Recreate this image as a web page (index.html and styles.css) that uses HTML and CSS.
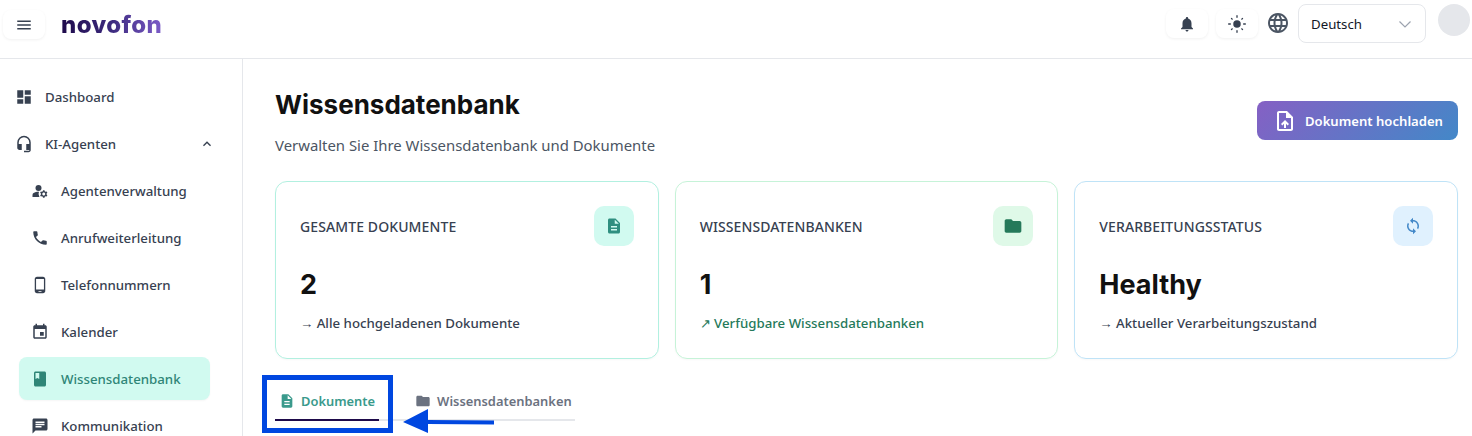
FILE: index.html
```html
<!DOCTYPE html>
<html lang="de">
<head>
<meta charset="utf-8">
<title>Wissensdatenbank</title>
<link rel="stylesheet" href="styles.css">
</head>
<body>
<header class="topbar">
  <div class="topbar-left">
    <button class="icon-btn menu-btn"><svg viewBox="0 0 24 24" class="i18"><path d="M3 18h18v-2H3v2zm0-5h18v-2H3v2zm0-7v2h18V6H3z"/></svg></button>
    <span class="logo">novofon</span>
  </div>
  <div class="topbar-right">
    <button class="icon-btn"><svg viewBox="0 0 24 24" class="i18"><path d="M12 22c1.100 0 2-.9 2-2h-4c0 1.100.9 2 2 2zm6-6v-5c0-3.070-1.630-5.640-4.500-6.320V4c0-.83-.67-1.500-1.500-1.500s-1.500.67-1.500 1.500v.68C7.640 5.360 6 7.920 6 11v5l-2 2v1h16v-1l-2-2z"/></svg></button>
    <button class="icon-btn"><svg viewBox="0 0 24 24" class="i20"><path d="M12 7.500a4.500 4.500 0 1 0 0 9 4.500 4.500 0 0 0 0-9zM2 12.800h2a.8.8 0 0 0 0-1.600H2a.8.8 0 0 0 0 1.600zm18 0h2a.8.8 0 0 0 0-1.600h-2a.8.8 0 0 0 0 1.600zM11.200 2v2a.8.8 0 0 0 1.600 0V2a.8.8 0 0 0-1.600 0zm0 18v2a.8.8 0 0 0 1.600 0v-2a.8.8 0 0 0-1.600 0zM5.800 4.700a.8.8 0 0 0-1.100 1.100l1.100 1.100a.8.8 0 0 0 1.100-1.100L5.800 4.700zm12.400 12.400a.8.8 0 0 0-1.100 1.100l1.100 1.100a.8.8 0 0 0 1.100-1.100l-1.100-1.100zm1.100-11.300a.8.8 0 0 0-1.100-1.100l-1.100 1.100a.8.8 0 0 0 1.100 1.100l1.100-1.100zM6.900 18.200a.8.8 0 0 0-1.100-1.100l-1.100 1.100a.8.8 0 0 0 1.100 1.100l1.100-1.100z"/></svg></button>
    <svg viewBox="0 0 24 24" class="globe"><path d="M11.990 2C6.470 2 2 6.480 2 12s4.470 10 9.990 10C17.520 22 22 17.520 22 12S17.520 2 11.990 2zm6.930 6h-2.950c-.32-1.250-.78-2.450-1.380-3.560 1.840.63 3.370 1.910 4.330 3.560zM12 4.040c.83 1.200 1.480 2.530 1.910 3.960h-3.820c.43-1.430 1.080-2.760 1.910-3.960zM4.260 14C4.100 13.360 4 12.690 4 12s.1-1.360.26-2h3.380c-.08.66-.14 1.320-.14 2s.06 1.340.14 2H4.260zm.82 2h2.950c.32 1.250.78 2.450 1.380 3.560-1.840-.63-3.370-1.900-4.330-3.560zm2.950-8H5.080c.96-1.660 2.490-2.930 4.330-3.560C8.810 5.550 8.350 6.750 8.030 8zM12 19.960c-.83-1.200-1.480-2.530-1.910-3.960h3.820c-.43 1.430-1.080 2.760-1.910 3.960zM14.340 14H9.660c-.09-.66-.16-1.320-.16-2s.07-1.350.16-2h4.680c.09.65.16 1.320.16 2s-.07 1.340-.16 2zm.25 5.560c.6-1.110 1.060-2.310 1.380-3.560h2.950c-.96 1.650-2.490 2.930-4.330 3.560zM16.360 14c.08-.66.14-1.320.14-2s-.06-1.340-.14-2h3.380c.16.64.26 1.310.26 2s-.1 1.360-.26 2h-3.380z"/></svg>
    <div class="lang"><span>Deutsch</span><svg viewBox="0 0 16 16" class="lang-caret"><path d="M2.500 5.500 8 11l5.500-5.500"/></svg></div>
    <div class="avatar"></div>
  </div>
</header>
<div class="shell">
  <nav class="sidebar">
    <a class="nav-item"><svg viewBox="0 0 24 24" class="i18"><path d="M3 13h8V3H3v10zm0 8h8v-6H3v6zm10 0h8V11h-8v10zm0-18v6h8V3h-8z"/></svg><span>Dashboard</span></a>
    <a class="nav-item"><svg viewBox="0 0 24 24" class="i18"><path d="M12 1a9 9 0 0 0-9 9v7c0 1.660 1.340 3 3 3h3v-8H5v-2a7 7 0 0 1 14 0v2h-4v8h4v1h-7v2h6c1.660 0 3-1.340 3-3V10a9 9 0 0 0-9-9z"/></svg><span>KI-Agenten</span><svg viewBox="0 0 24 24" class="chev"><path d="M7.410 15.410 12 10.830l4.590 4.580L18 14l-6-6-6 6z"/></svg></a>
    <div class="sub">
      <a class="nav-item"><svg viewBox="0 0 24 24" class="i18"><circle cx="10" cy="8" r="4"/><path d="M10.670 13.020C10.450 13.010 10.230 13 10 13c-2.420 0-4.680.67-6.610 1.820C2.510 15.340 2 16.320 2 17.350V20h9.260A6.960 6.960 0 0 1 10.670 13.020zM20.750 16c0-.220-.030-.420-.060-.630l1.140-1.010-1-1.730-1.450.49c-.320-.270-.680-.480-1.080-.630L18 11h-2l-.300 1.490c-.400.150-.760.360-1.080.630l-1.450-.49-1 1.730 1.140 1.010c-.030.210-.060.410-.060.630s.030.420.060.630l-1.140 1.010 1 1.730 1.450-.49c.320.270.680.480 1.080.630L16 21h2l.300-1.490c.400-.150.760-.360 1.080-.630l1.450.49 1-1.730-1.140-1.010c.030-.210.060-.410.060-.630zM17 18c-1.100 0-2-.900-2-2s.900-2 2-2 2 .900 2 2-.900 2-2 2z"/></svg><span>Agentenverwaltung</span></a>
      <a class="nav-item"><svg viewBox="0 0 24 24" class="i18"><path d="M6.620 10.790c1.440 2.830 3.760 5.140 6.590 6.590l2.200-2.200c.27-.27.670-.36 1.020-.24 1.120.37 2.330.57 3.570.57.550 0 1 .45 1 1V20c0 .55-.45 1-1 1-9.390 0-17-7.610-17-17 0-.55.450-1 1-1h3.500c.55 0 1 .45 1 1 0 1.250.2 2.450.57 3.570.11.350.03.740-.25 1.020l-2.200 2.200z"/></svg><span>Anrufweiterleitung</span></a>
      <a class="nav-item"><svg viewBox="0 0 24 24" class="i18"><path d="M16 1H8C6.340 1 5 2.340 5 4v16c0 1.660 1.340 3 3 3h8c1.660 0 3-1.340 3-3V4c0-1.660-1.340-3-3-3zm-2 20h-4v-1h4v1zm3.250-3H6.750V4h10.500v14z"/></svg><span>Telefonnummern</span></a>
      <a class="nav-item"><svg viewBox="0 0 24 24" class="i18"><path d="M17 12h-5v5h5v-5zM16 1v2H8V1H6v2H5c-1.110 0-1.990.9-1.990 2L3 19c0 1.100.89 2 2 2h14c1.100 0 2-.9 2-2V5c0-1.100-.9-2-2-2h-1V1h-2zm3 18H5V8h14v11z"/></svg><span>Kalender</span></a>
      <a class="nav-item active"><svg viewBox="0 0 24 24" class="i18"><path d="M18 2H6c-1.100 0-2 .9-2 2v16c0 1.100.9 2 2 2h12c1.100 0 2-.9 2-2V4c0-1.100-.9-2-2-2zM6 4h5v8l-2.500-1.500L6 12V4z"/></svg><span>Wissensdatenbank</span></a>
      <a class="nav-item"><svg viewBox="0 0 24 24" class="i18"><path d="M20 2H4c-1.100 0-1.990.9-1.990 2L2 22l4-4h14c1.100 0 2-.9 2-2V4c0-1.100-.9-2-2-2zM6 9h12v2H6V9zm8 5H6v-2h8v2zm4-6H6V6h12v2z"/></svg><span>Kommunikation</span></a>
    </div>
  </nav>
  <main class="content">
    <div class="page-head">
      <div>
        <h1>Wissensdatenbank</h1>
        <p class="subtitle">Verwalten Sie Ihre Wissensdatenbank und Dokumente</p>
      </div>
      <button class="upload"><svg viewBox="0 0 24 24" class="i24"><path d="M14 2H6c-1.100 0-1.990.9-1.990 2L4 20c0 1.100.890 2 1.990 2H18c1.100 0 2-.9 2-2V8l-6-6zm4 18H6V4h7v5h5v11zM8 15.010l1.410 1.410L11 14.840V19h2v-4.160l1.590 1.590L16 15.010 12.010 11 8 15.010z"/></svg>Dokument hochladen</button>
    </div>
    <section class="cards">
      <article class="card card-teal">
        <div class="card-top"><span class="card-label">GESAMTE DOKUMENTE</span><span class="card-icon"><svg viewBox="0 0 24 24" class="i18"><path d="M14 2H6c-1.100 0-1.990.9-1.990 2L4 20c0 1.100.890 2 1.990 2H18c1.100 0 2-.9 2-2V8l-6-6zm2 16H8v-2h8v2zm0-4H8v-2h8v2zm-3-5V3.500L18.500 9H13z"/></svg></span></div>
        <div class="card-value">2</div>
        <div class="card-note">→ Alle hochgeladenen Dokumente</div>
      </article>
      <article class="card card-green">
        <div class="card-top"><span class="card-label">WISSENSDATENBANKEN</span><span class="card-icon"><svg viewBox="0 0 24 24" class="i20"><path d="M10 4H4c-1.100 0-1.990.9-1.990 2L2 18c0 1.100.9 2 2 2h16c1.100 0 2-.9 2-2V8c0-1.100-.9-2-2-2h-8l-2-2z"/></svg></span></div>
        <div class="card-value">1</div>
        <div class="card-note note-green">↗ Verfügbare Wissensdatenbanken</div>
      </article>
      <article class="card card-blue">
        <div class="card-top"><span class="card-label">VERARBEITUNGSSTATUS</span><span class="card-icon"><svg viewBox="0 0 24 24" class="i18"><path d="M12 4V1L8 5l4 4V6c3.310 0 6 2.690 6 6 0 1.010-.25 1.970-.7 2.800l1.460 1.460C19.540 15.030 20 13.570 20 12c0-4.420-3.580-8-8-8zm0 14c-3.310 0-6-2.690-6-6 0-1.010.25-1.970.7-2.800L5.240 7.740C4.460 8.970 4 10.430 4 12c0 4.420 3.580 8 8 8v3l4-4-4-4v3z"/></svg></span></div>
        <div class="card-value">Healthy</div>
        <div class="card-note">→ Aktueller Verarbeitungszustand</div>
      </article>
    </section>
    <div class="tabs">
      <a class="tab tab-active"><svg viewBox="0 0 24 24" class="i16"><path d="M14 2H6c-1.100 0-1.990.9-1.990 2L4 20c0 1.100.890 2 1.990 2H18c1.100 0 2-.9 2-2V8l-6-6zm2 16H8v-2h8v2zm0-4H8v-2h8v2zm-3-5V3.500L18.500 9H13z"/></svg>Dokumente</a>
      <a class="tab"><svg viewBox="0 0 24 24" class="i16"><path d="M10 4H4c-1.100 0-1.990.9-1.990 2L2 18c0 1.100.9 2 2 2h16c1.100 0 2-.9 2-2V8c0-1.100-.9-2-2-2h-8l-2-2z"/></svg>Wissensdatenbanken</a>
    </div>
  </main>
</div>
<div class="mark-box"></div>
<svg class="mark-arrow" viewBox="0 0 92 24"><path d="M0 13 25 0v11l66 .5v4L25 15v9z"/></svg>
</body>
</html>
```
FILE: styles.css
```css
* { box-sizing: border-box; }
html, body { margin: 0; height: 436px; overflow: hidden; }
body { background: #fff; font-family: "Noto Sans", sans-serif; color: #374151; position: relative; }
svg { fill: currentColor; flex: none; display: block; }
.i16 { width: 16px; height: 16px; }
.i18 { width: 18px; height: 18px; }
.i20 { width: 20px; height: 20px; }
.i24 { width: 24px; height: 24px; }

.topbar { height: 59px; border-bottom: 1px solid #e5e7eb; display: flex; justify-content: space-between; padding: 0 2px 0 3px; }
.topbar-left { display: flex; align-items: center; gap: 16px; padding-bottom: 9px; }
.topbar-right { display: flex; align-items: flex-start; padding-top: 4px; }
.icon-btn { width: 42px; height: 29px; border: 0; background: #fff; border-radius: 8px; box-shadow: 0 1px 3px rgba(0,0,0,.06); color: #374151; display: flex; align-items: center; justify-content: center; padding: 0; }
.topbar-right .icon-btn { margin: 5px 0 0 8px; }
.topbar-right .icon-btn:first-child { margin-left: 0; }
.logo { font-family: "Inter", sans-serif; font-weight: 800; font-size: 24px; line-height: 30px; letter-spacing: .4px; background: linear-gradient(90deg, #1e0a4a 0%, #3c2a7e 50%, #7c5cc8 100%); -webkit-background-clip: text; background-clip: text; color: transparent; }
.globe { width: 24px; height: 24px; color: #4b5563; margin: 7px 0 0 8px; }
.lang { width: 128px; height: 39px; margin-left: 8px; border: 1px solid #e5e7eb; border-radius: 8px; display: flex; align-items: center; justify-content: space-between; padding: 0 12px; font-size: 13.25px; color: #111827; }
.lang-caret { width: 16px; height: 16px; fill: none; stroke: #9ca3af; stroke-width: 1.2; }
.avatar { width: 32px; height: 32px; margin-left: 12px; border-radius: 50%; background: #e5e7eb; }

.shell { display: flex; height: 377px; }
.sidebar { width: 243px; flex: none; border-right: 1px solid #e5e7eb; padding: 16px 16px 0 3px; overflow: hidden; display: flex; flex-direction: column; gap: 4px; }
.nav-item { height: 43px; flex: none; display: flex; align-items: center; gap: 12px; padding: 0 11px 0 12px; border-radius: 8px; font-size: 13.25px; font-weight: 500; color: #374151; }
.nav-item .chev { width: 16px; height: 16px; margin-left: auto; }
.sub { margin: 0 16px; display: flex; flex-direction: column; gap: 4px; }
.active { background: #d1faf0; color: #2f8577; box-shadow: 0 1px 2px rgba(0,0,0,.04); }

.content { flex: 1; min-width: 0; padding: 27px 14px 0 32px; }
.page-head { display: flex; justify-content: space-between; align-items: flex-start; }
h1 { margin: 0; font-family: "Inter", sans-serif; font-size: 26px; line-height: 38px; font-weight: 700; color: #111; }
.subtitle { margin: 10px 0 0; font-size: 14.9px; line-height: 22px; color: #4b5563; }
.upload { margin-top: 15px; width: 201px; height: 39px; border: 0; border-radius: 8px; padding: 0 15px 0 16px; display: flex; align-items: center; gap: 8px; font-family: inherit; font-size: 13.1px; font-weight: 600; color: #fff; background: linear-gradient(135deg, #8560c4 0%, #4388c8 100%); white-space: nowrap; }

.cards { display: grid; grid-template-columns: repeat(3, 1fr); gap: 16px; margin-top: 25px; }
.card { height: 178px; border: 1px solid; border-radius: 12px; padding: 24px 24px 0; box-shadow: 0 1px 2px rgba(0,0,0,.03); }
.card-teal { border-color: #b2f0e0; }
.card-green { border-color: #c6f3d8; }
.card-blue { border-color: #bfe3f7; }
.card-top { display: flex; justify-content: space-between; align-items: center; }
.card-label { font-size: 14px; font-weight: 500; letter-spacing: .1px; color: #374151; }
.card-icon { width: 40px; height: 40px; border-radius: 10px; display: flex; align-items: center; justify-content: center; }
.card-teal .card-icon { background: #d1faf0; color: #2f8f80; }
.card-green .card-icon { background: #dff9e8; color: #25795a; }
.card-blue .card-icon { background: #e0f1fe; color: #4388c8; }
.card-value { margin-top: 20px; font-family: "Inter", sans-serif; font-size: 27px; line-height: 38px; font-weight: 700; color: #111; }
.card-note { margin-top: 9px; font-size: 13.25px; line-height: 20px; font-weight: 500; color: #374151; }
.note-green { color: #25795a; }

.tabs { display: flex; margin-top: 16px; width: 300px; border-bottom: 2px solid #e5e7eb; }
.tab { height: 46px; display: flex; align-items: center; gap: 6px; padding: 8px 4px 0; margin-right: 32px; font-size: 12.9px; font-weight: 600; color: #6b7280; margin-bottom: -2px; border-bottom: 2px solid transparent; }
.tab-active { color: #3a9a8c; border-bottom-color: #1e0a4a; }

.mark-box { position: absolute; left: 262px; top: 375px; width: 131px; height: 58px; border: 5px solid #0047e0; }
.mark-arrow { position: absolute; left: 403px; top: 409px; width: 92px; height: 24px; fill: #0047e0; }
```
